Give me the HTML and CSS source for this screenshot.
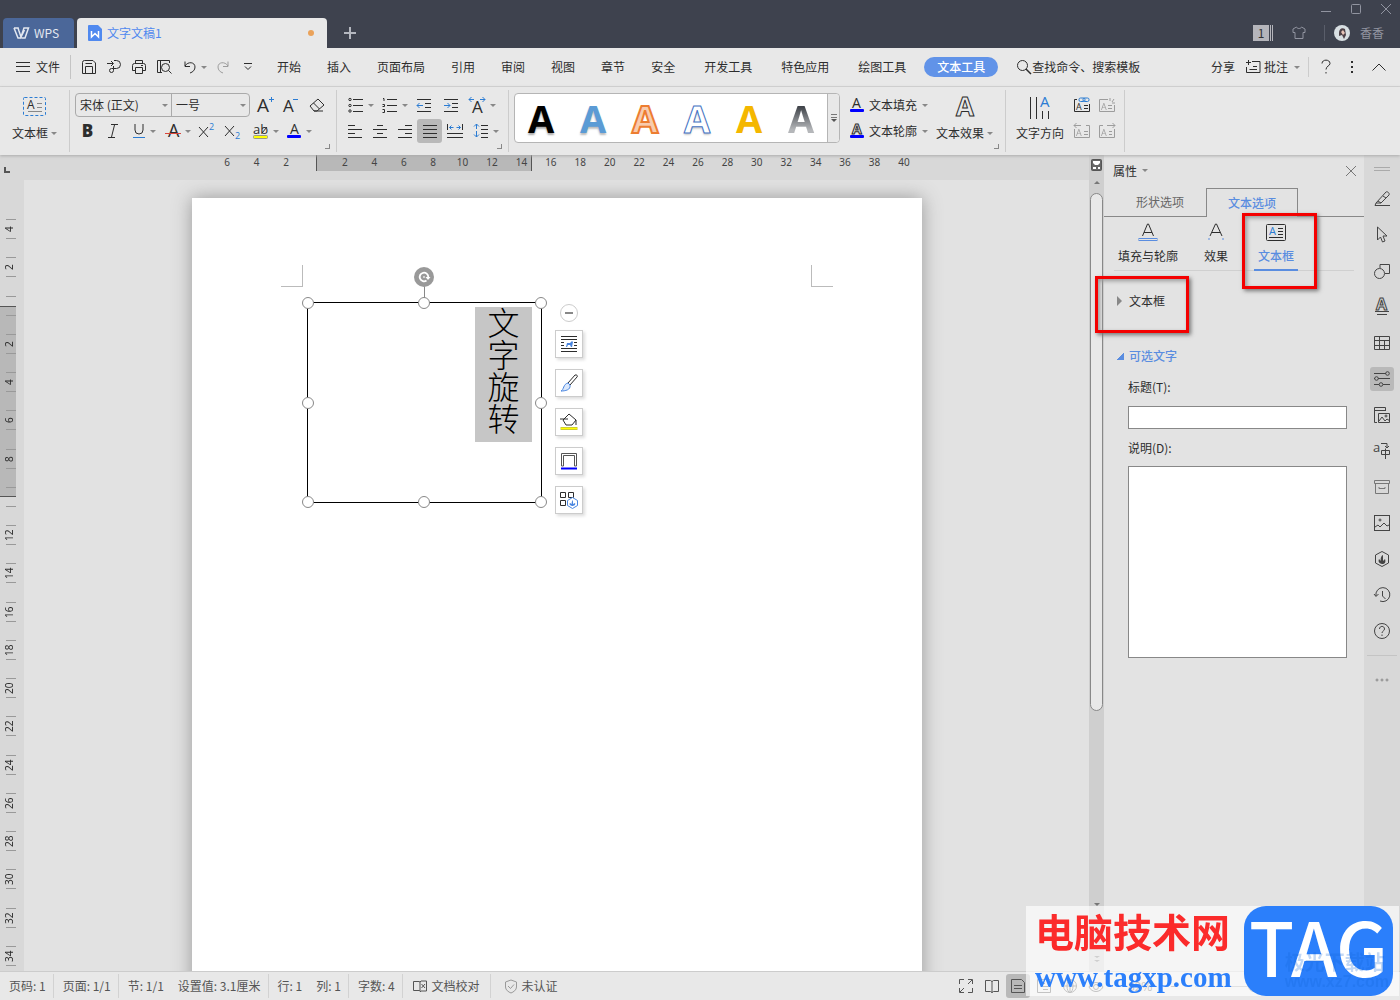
FILE: index.html
```html
<!DOCTYPE html>
<html lang="zh-CN">
<head>
    <meta charset="UTF-8">
    <meta name="viewport" content="width=device-width, initial-scale=1.0">
    <title>文字文稿1 - WPS</title>
    <link rel="stylesheet" href="styles.css">
</head>
<body>
    <header class="titlebar">
        <button class="wps-tab">
            <svg width="17" height="12" viewBox="0 0 17 12"><path d="M1 1h4l3 9L11 1h4.500L12 11H8.500M1 1l4 10h2.500l4-8M5 1l1 3" stroke-width="1.500"/></svg>
            WPS
        </button>
        <div class="doc-tab">
            <svg width="14" height="16" viewBox="0 0 14 16"><path d="M1 0h9l4 4v11a1 1 0 0 1-1 1H1a1 1 0 0 1-1-1V1a1 1 0 0 1 1-1z" fill="#5089ef" stroke="none"/><path d="M3.500 6v6L7 8.500l3.500 3.500V6" stroke="#fff" stroke-width="1.500"/></svg>
            <span>文字文稿1</span>
            <i class="unsaved"></i>
        </div>
        <button class="new-tab" aria-label="新建"><svg width="12" height="12" viewBox="0 0 12 12"><path d="M6 0v12M0 6h12" stroke-width="2"/></svg></button>
        <div class="title-right">
            <div class="window-buttons">
                <button aria-label="最小化"><svg width="12" height="12" viewBox="0 0 12 12"><path d="M1 8.500h10"/></svg></button>
                <button aria-label="最大化"><svg width="12" height="12" viewBox="0 0 12 12"><rect x="1.500" y="1.500" width="9" height="9" rx="1"/></svg></button>
                <button aria-label="关闭"><svg width="12" height="12" viewBox="0 0 12 12"><path d="M1 1l10 10M11 1L1 11"/></svg></button>
            </div>
            <div class="account">
                <span class="count">1</span>
                <svg width="14" height="14" viewBox="0 0 14 14"><path d="M4.500 1L1 3v3.500h2V12.500h8V6.500h2V3L9.500 1C9 3 5 3 4.500 1z"/></svg>
                <span class="user">
                    <svg width="16" height="16" viewBox="0 0 16 16"><circle cx="8" cy="8" r="8" fill="#d8dfe2" stroke="none"/><path d="M5 8c0-4 3-6 6-4l1 6-2 4-2-4-3 1z" fill="#4d4147" stroke="none"/><path d="M7 7l2-2 2 3-2 2z" fill="#e9c5b8" stroke="none"/></svg>
                    香香
                </span>
            </div>
        </div>
    </header>

    <nav class="menubar">
        <button class="file-btn"><svg width="14" height="12" viewBox="0 0 14 12"><path d="M0 1.500h14M0 5.500h14M0 10.500h14"/></svg>文件</button>
        <div class="quick">
            <button class="ic" aria-label="保存"><svg width="16" height="16" viewBox="0 0 16 16"><path d="M1.500 14.500v-11a2 2 0 0 1 2-2H12l2.500 2.500v10.500zM4.500 14V7.500h7V14M4.500 4.500H11"/></svg></button>
            <button class="ic" aria-label="输出"><svg width="16" height="16" viewBox="0 0 16 16"><path d="M1 4.500h6M5 2l2.500 2.500L5 7M8 1.500h2.500a4 4 0 0 1 0 8H7.500v2a2 2 0 1 1-2-2h2V7"/></svg></button>
            <button class="ic" aria-label="打印"><svg width="16" height="16" viewBox="0 0 16 16"><path d="M4.500 4V1.500h7V4M4 11.500H1.500v-5a2 2 0 0 1 2-2h9a2 2 0 0 1 2 2v5H12M4.500 8.500h7v6h-7zM10 6.500h2"/></svg></button>
            <button class="ic" aria-label="预览"><svg width="16" height="16" viewBox="0 0 16 16"><path d="M6 13.500H1.500v-12h12V4M4.500 13V1.500"/><circle cx="9.500" cy="8.500" r="4"/><path d="M12.500 11.500l3 3"/></svg></button>
            <button class="ic caret" aria-label="撤销"><svg width="14" height="16" viewBox="0 0 14 16"><path d="M2 2.500v5h5M2 7c3-5 10-4 10 1 0 3-2 5-5 6"/></svg></button>
            <button class="ic faded" aria-label="恢复"><svg width="14" height="16" viewBox="0 0 14 16"><path d="M12 2.500v5H7M12 7C9 2 2 3 2 8c0 3 2 5 5 6"/></svg></button>
            <button class="ic" aria-label="更多"><svg width="10" height="8" viewBox="0 0 10 8"><path d="M1 .5h8M2 3.500l3 3 3-3"/></svg></button>
        </div>
        <div class="tabs">
            <a href="#">开始</a>
            <a href="#">插入</a>
            <a href="#">页面布局</a>
            <a href="#">引用</a>
            <a href="#">审阅</a>
            <a href="#">视图</a>
            <a href="#">章节</a>
            <a href="#">安全</a>
        </div>
        <div class="tabs tabs-wide">
            <a href="#">开发工具</a>
            <a href="#">特色应用</a>
            <a href="#">绘图工具</a>
        </div>
        <a href="#" class="tab-active">文本工具</a>
        <button class="search"><svg width="16" height="16" viewBox="0 0 16 16"><circle cx="6.500" cy="6.500" r="5"/><path d="M10 10l5 5" stroke-width="1.500"/></svg>查找命令、搜索模板</button>
        <div class="menu-right">
            <button>分享</button>
            <button class="comment caret"><svg width="16" height="16" viewBox="0 0 16 16"><path d="M7 2.500h8v11H1.500V8M1 3.500h5M3.500 1v5M4.500 10.500H12M8 7.500h4"/></svg>批注</button>
            <span class="bar"></span>
            <button class="ic" aria-label="帮助"><svg width="12" height="16" viewBox="0 0 12 16"><path d="M2 4.500C2 0 10 0 10 4.500 10 7 6 7 6 10.500M6 13v1.500"/></svg></button>
            <button class="ic wide" aria-label="选项"><svg width="4" height="14" viewBox="0 0 4 14"><path d="M2 1v2M2 6v2M2 11v2" stroke-width="2"/></svg></button>
            <button class="ic" aria-label="折叠"><svg width="14" height="8" viewBox="0 0 14 8"><path d="M.5 7.500L7 1l6.500 6.500"/></svg></button>
        </div>
    </nav>

    <section class="ribbon">
        <div class="group">
            <button class="big caret-text">
                <svg width="24" height="22" viewBox="0 0 24 22"><rect x=".5" y="1.500" width="22" height="18" rx="1" stroke="#2b7cd3" stroke-dasharray="3 2"/><text x="4" y="13" font-size="12">A</text><path d="M14 7.500h5M14 11.500h5M5 15.500h14" stroke="#888"/></svg>
                <span>文本框</span>
            </button>
        </div>
        <div class="group rows font-group">
            <div class="row">
                <div class="combos">
                    <label class="combo family"><select aria-label="字体"><option>宋体 (正文)</option></select></label>
                    <label class="combo size"><select aria-label="字号"><option>一号</option></select></label>
                </div>
                <button class="ic" aria-label="增大字号"><svg width="18" height="18" viewBox="0 0 18 18"><text x="0" y="16" font-size="19">A</text><path d="M12 3.500h5M14.500 1v5" stroke="#2b7cd3"/></svg></button>
                <button class="ic" aria-label="减小字号"><svg width="18" height="18" viewBox="0 0 18 18"><text x="1" y="16" font-size="17">A</text><path d="M11 3.500h5" stroke="#2b7cd3"/></svg></button>
                <button class="ic wide" aria-label="清除格式"><svg width="18" height="16" viewBox="0 0 18 16"><path d="M2 9l8-7 6 6-7 6H6zM5.500 6l6 6M6 14h9"/></svg></button>
            </div>
            <div class="row">
                <button class="ic letter" aria-label="加粗"><b>B</b></button>
                <button class="ic" aria-label="倾斜"><svg width="12" height="16" viewBox="0 0 12 16"><path d="M4 1.500h7M1 14.500h7M7.500 2L4.500 14"/></svg></button>
                <button class="ic caret" aria-label="下划线"><svg width="14" height="16" viewBox="0 0 14 16"><path d="M3 1v6a4 4 0 0 0 8 0V1"/><path d="M1 14.500h12" stroke="#2b7cd3"/></svg></button>
                <button class="ic caret" aria-label="删除线"><svg width="16" height="16" viewBox="0 0 16 16"><text x="3" y="14" font-size="18">A</text><path d="M0 10.500h16" stroke="#d9453b"/></svg></button>
                <button class="ic" aria-label="上标"><svg width="16" height="16" viewBox="0 0 16 16"><path d="M1 4l9 10M10 4L1 14"/><text x="11" y="7" font-size="9" class="blue">2</text></svg></button>
                <button class="ic wide" aria-label="下标"><svg width="16" height="16" viewBox="0 0 16 16"><path d="M1 3l9 10M10 3L1 13"/><text x="11" y="16" font-size="9" class="blue">2</text></svg></button>
                <button class="ic caret" aria-label="突出显示"><svg width="17" height="16" viewBox="0 0 17 16"><text x="1" y="11" font-size="13">ab</text><path d="M15 4l-5 6"/><rect x="1.500" y="12.500" width="14" height="3" rx="1" fill="#ff0" stroke="#998"/></svg></button>
                <button class="ic caret" aria-label="字体颜色"><svg width="16" height="16" viewBox="0 0 16 16"><text x="4" y="11" font-size="14">A</text><rect x="1" y="12" width="14" height="3" rx="1" fill="#00f" stroke="none"/></svg></button>
            </div>
            <i class="launcher"></i>
        </div>
        <div class="group rows para-group">
            <div class="row">
                <button class="ic caret" aria-label="项目符号"><svg width="16" height="16" viewBox="0 0 16 16"><path d="M5 2.500h10M5 8.500h10M5 14.500h10"/><circle cx="2" cy="2.500" r="1.200"/><circle cx="2" cy="8.500" r="1.200"/><circle cx="2" cy="14" r="1.200"/></svg></button>
                <button class="ic caret" aria-label="编号"><svg width="16" height="16" viewBox="0 0 16 16"><path d="M5 2.500h10M5 8.500h10M5 14.500h10M1 1.500h1V4M.5 7.500h2v2h-2M.5 12.500h2v3h-2"/></svg></button>
                <button class="ic wide" aria-label="减少缩进"><svg width="16" height="16" viewBox="0 0 16 16"><path d="M1 2.500h14M9 6.500h6M9 10.500h6M1 14.500h14"/><path d="M1 8.500h6M3.500 6L1 8.500 3.500 11" stroke="#2b7cd3"/></svg></button>
                <button class="ic" aria-label="增加缩进"><svg width="16" height="16" viewBox="0 0 16 16"><path d="M1 2.500h14M9 6.500h6M9 10.500h6M1 14.500h14"/><path d="M1 8.500h6M4.500 6L7 8.500 4.500 11" stroke="#2b7cd3"/></svg></button>
                <button class="ic caret" aria-label="字符缩放"><svg width="18" height="18" viewBox="0 0 18 18"><text x="4" y="17" font-size="17">A</text><path d="M1 3.500h5M3.500 1L1 3.500 3.500 6M12 3.500h5M14.500 1L17 3.500 14.500 6" stroke="#2b7cd3"/></svg></button>
            </div>
            <div class="row">
                <button class="ic" aria-label="左对齐"><svg width="16" height="16" viewBox="0 0 16 16"><path d="M1 2.500h7M1 6.500h14M1 10.500h7M1 14.500h14"/></svg></button>
                <button class="ic" aria-label="居中"><svg width="16" height="16" viewBox="0 0 16 16"><path d="M5 2.500h6M1 6.500h14M5 10.500h6M1 14.500h14"/></svg></button>
                <button class="ic" aria-label="右对齐"><svg width="16" height="16" viewBox="0 0 16 16"><path d="M8 2.500h7M1 6.500h14M8 10.500h7M1 14.500h14"/></svg></button>
                <button class="ic on" aria-label="两端对齐"><svg width="16" height="16" viewBox="0 0 16 16"><path d="M1 2.500h14M1 6.500h14M1 10.500h14M1 14.500h14"/></svg></button>
                <button class="ic" aria-label="分散对齐"><svg width="18" height="16" viewBox="0 0 18 16"><path d="M1.500 1v6M16.500 1v6M1 10.500h16M1 14.500h16"/><path d="M3.500 4.500h4M5.500 2.500l-2 2 2 2M10.500 4.500h4M12.500 2.500l2 2-2 2" stroke="#2b7cd3"/></svg></button>
                <button class="ic caret" aria-label="行距"><svg width="16" height="16" viewBox="0 0 16 16"><path d="M8 2.500h7M8 6.500h7M8 10.500h7M8 14.500h7"/><path d="M3.500 1v5M1 3.500L3.500 1 6 3.500M3.500 8v6M1 11.500L3.500 14 6 11.500" stroke="#2b7cd3"/></svg></button>
            </div>
            <i class="launcher"></i>
        </div>
        <div class="group text-group">
            <div class="gallery">
                <button class="wa wa-black">A</button>
                <button class="wa wa-blue">A</button>
                <button class="wa wa-orange">A</button>
                <button class="wa wa-outline">A</button>
                <button class="wa wa-gold">A</button>
                <button class="wa wa-gray">A</button>
                <button class="more" aria-label="更多样式"><svg width="8" height="10" viewBox="0 0 8 10"><path d="M1 1.500h6M1 4.500h6" stroke="#777"/><path d="M1 6h6L4 9z" fill="#555" stroke="none"/></svg></button>
            </div>
            <div class="rows">
                <button class="line-btn caret"><svg width="14" height="16" viewBox="0 0 14 16"><text x="2" y="11" font-size="14">A</text><rect y="12" width="14" height="3" rx="1" fill="#00f" stroke="none"/></svg>文本填充</button>
                <button class="line-btn caret"><svg width="14" height="16" viewBox="0 0 14 16"><text x="2" y="11" font-size="14" class="hollow">A</text><rect y="12" width="14" height="3" rx="1" fill="#00f" stroke="none"/></svg>文本轮廓</button>
            </div>
            <button class="big caret-text">
                <svg width="24" height="22" viewBox="0 0 24 22"><text x="3" y="20" font-size="26" class="hollow">A</text></svg>
                <span>文本效果</span>
            </button>
            <i class="launcher"></i>
        </div>
        <div class="group dir-group">
            <button class="big">
                <svg width="24" height="24" viewBox="0 0 24 24"><path d="M2.500 1v22M8.500 1v22M14.500 15v8M20.500 15v8"/><text x="12" y="11" font-size="15" class="blue">A</text></svg>
                <span>文字方向</span>
            </button>
            <div class="rows">
                <div class="row">
                    <button class="ic" aria-label="创建链接"><svg width="18" height="16" viewBox="0 0 18 16"><path d="M4 2.500H1.500v12h15V7"/><text x="3" y="13" font-size="9">A</text><path d="M11 8.500h4M11 11.500h4"/><g stroke="#2b7cd3"><rect x="6" y="1" width="6" height="3.500" rx="1.500"/><rect x="10" y="1" width="6" height="3.500" rx="1.500"/></g></svg></button>
                    <button class="ic faded" aria-label="断开链接"><svg width="18" height="16" viewBox="0 0 18 16"><path d="M10 2.500H1.500v12h15V8M12 4V1M14 5l2-3M14 6h3"/><text x="3" y="13" font-size="9">A</text><path d="M10 8.500h4M10 11.500h4"/></svg></button>
                </div>
                <div class="row">
                    <button class="ic faded" aria-label="前一文本框"><svg width="18" height="16" viewBox="0 0 18 16"><path d="M1.500 6v8.500h15V2.500H13M1 2.500h7M3.500 0L1 2.500 3.500 5"/><text x="3" y="13" font-size="9">A</text><path d="M11 8.500h4M11 11.500h4"/></svg></button>
                    <button class="ic faded" aria-label="后一文本框"><svg width="18" height="16" viewBox="0 0 18 16"><path d="M5 2.500H1.500v12h15V6M9 2.500h8M14.500 0L17 2.500 14.500 5"/><text x="3" y="13" font-size="9">A</text><path d="M11 8.500h3M11 11.500h3"/></svg></button>
                </div>
            </div>
        </div>
    </section>

    <main class="workspace">
        <div class="vruler">
            <svg width="8" height="8" viewBox="0 0 8 8"><path d="M2 0v6M1 5h6" stroke="#555" stroke-width="2"/></svg>
            <ol>
                <li><b>4</b></li><li><b>2</b></li><li><b></b></li><li><b>2</b></li><li><b>4</b></li>
                <li><b>6</b></li><li><b>8</b></li><li><b></b></li><li><b>12</b></li><li><b>14</b></li>
                <li><b>16</b></li><li><b>18</b></li><li><b>20</b></li><li><b>22</b></li><li><b>24</b></li>
                <li><b>26</b></li><li><b>28</b></li><li><b>30</b></li><li><b>32</b></li><li><b>34</b></li>
            </ol>
        </div>
        <div class="editor">
            <div class="hruler">
                <ol>
                    <li>6</li><li>4</li><li>2</li><li></li><li>2</li><li>4</li><li>6</li><li>8</li>
                    <li>10</li><li>12</li><li>14</li><li>16</li><li>18</li><li>20</li><li>22</li><li>24</li>
                    <li>26</li><li>28</li><li>30</li><li>32</li><li>34</li><li>36</li><li>38</li><li>40</li>
                </ol>
            </div>
            <div class="canvas">
                <article class="page">
                    <i class="crop crop-left"></i>
                    <i class="crop crop-right"></i>
                    <div class="textbox">
                        <p>文字旋转</p>
                        <i class="stem"></i>
                        <button class="rotate" aria-label="旋转"><svg width="12" height="12" viewBox="0 0 12 12"><path d="M8.500 9.500A4.300 4.300 0 1 1 10.300 6" stroke="#fff" stroke-width="1.800"/><path d="M7.500 6h5L10 9z" fill="#fff" stroke="none"/><circle cx="6" cy="6" r=".5" stroke="#fff"/></svg></button>
                        <i class="handle nw"></i><i class="handle n"></i><i class="handle ne"></i>
                        <i class="handle w"></i><i class="handle e"></i>
                        <i class="handle sw"></i><i class="handle s"></i><i class="handle se"></i>
                    </div>
                    <div class="float-tools">
                        <button class="collapse" aria-label="收起"><svg width="10" height="10" viewBox="0 0 10 10"><path d="M1 5h8" stroke="#888" stroke-width="2"/></svg></button>
                        <button aria-label="布局选项"><svg width="18" height="18" viewBox="0 0 18 18"><path d="M1 1.500h16M1 4.500h16M1 7.500h3M14 7.500h3M1 10.500h3M14 10.500h3M1 13.500h16M1 16.500h16"/><path d="M6 12l1-4h3l2-2 1 1-1 5h-1l-1-2H8l-1 2z" fill="#4a86e0" stroke="none"/></svg></button>
                        <button aria-label="形状样式"><svg width="18" height="18" viewBox="0 0 18 18"><path d="M8 9l7-8c2-.5 3 1 2 2l-7 8z"/><path d="M8 9l2 2c1 5-5 6-9 6 3-1 2-7 7-8z" stroke="#4a86e0" fill="#dbe8fb"/></svg></button>
                        <button aria-label="填充"><svg width="18" height="18" viewBox="0 0 18 18"><path d="M3 7l6-6 7 6-4 5H6zM0 6h8M16 7v5"/><rect x="1" y="14.500" width="16" height="2" fill="#ff0" stroke="#cc3"/></svg></button>
                        <button aria-label="轮廓"><svg width="18" height="18" viewBox="0 0 18 18"><path d="M1.500 14V1.500h15V14h-2V3.500h-11V14z" stroke="#555"/><path d="M1 16.500h16" stroke="#00f" stroke-width="2"/></svg></button>
                        <button aria-label="更多设置"><svg width="18" height="18" viewBox="0 0 18 18"><path d="M.5 1.500h5v5h-5zM8.500 1.500h5v5h-5zM.5 9.500h5v5h-5z"/><path d="M12.500 6.500l5 3v5l-5 3-5-3v-5z" stroke="#4a86e0" fill="#fff"/><path d="M12 15c-4-1-2-3-2-3l2 1c-1-2 1-4 1-4v4l2-1c1 2-1 3-3 3z" fill="#4a86e0" stroke="none"/></svg></button>
                    </div>
                </article>
            </div>
        </div>
        <div class="scrollbar">
            <svg class="ruler-toggle" width="11" height="12" viewBox="0 0 11 12"><rect x=".5" y=".5" width="10" height="11" rx="1" fill="#666" stroke="#555"/><path d="M2 2h7v2L7 6H4L2 4zM2 8h3v2H2zM7 8h2v2H7z" fill="#fff" stroke="none"/></svg>
            <i class="arrow up"></i>
            <div class="thumb"></div>
            <i class="arrow down"></i>
            <svg class="page-jump" width="8" height="8" viewBox="0 0 8 8"><path d="M1 1h6L4 3zM1 5h6L4 7z" fill="#777" stroke="none"/></svg>
        </div>
        <aside class="panel">
            <div class="panel-head">
                <button class="caret">属性</button>
                <button aria-label="关闭"><svg width="10" height="10" viewBox="0 0 10 10"><path d="M0 0l10 10M10 0L0 10" stroke="#777"/></svg></button>
            </div>
            <div class="panel-tabs">
                <button>形状选项</button>
                <button class="active">文本选项</button>
            </div>
            <div class="sub-tabs">
                <button><svg width="20" height="20" viewBox="0 0 20 20"><path d="M4.500 14L9.500 2h1l5 12M6 10.500h8"/><rect x="1" y="16.500" width="18" height="2" stroke="#5a8de0"/></svg>填充与轮廓</button>
                <button><svg width="20" height="20" viewBox="0 0 20 20"><path d="M4 14L9.500 2h1L16 14M6 10.500h8"/><path d="M3 16v3M17 16v3" stroke="#5a8de0" stroke-dasharray="2 1"/></svg>效果</button>
                <button class="active"><svg width="20" height="20" viewBox="0 0 20 20"><rect x=".5" y="2.500" width="19" height="16" rx="1"/><text x="3" y="13" font-size="11" class="blue">A</text><path d="M12 6.500h5M12 9.500h5M12 12.500h5M3 15.500h14"/></svg>文本框</button>
            </div>
            <div class="sections">
                <button class="section closed">文本框</button>
                <button class="section open">可选文字</button>
                <label for="alt-title">标题(T):</label>
                <input type="text" id="alt-title">
                <label for="alt-desc">说明(D):</label>
                <textarea id="alt-desc"></textarea>
            </div>
            <i class="mark mark-tab"></i>
            <i class="mark mark-section"></i>
        </aside>
        <div class="side">
            <i class="grip"></i>
            <button aria-label="样式"><svg width="18" height="18" viewBox="0 0 18 18"><path d="M3 13L13 2c1-1 4 1 3 3L8 13zM3 13l-1 2.500h15M8 13l-3-2M10 6l3 2"/></svg></button>
            <button aria-label="选择"><svg width="18" height="18" viewBox="0 0 18 18"><path d="M4.500 1v13l3-3 2 5 2.500-1-2-5h4z"/></svg></button>
            <button aria-label="形状"><svg width="18" height="18" viewBox="0 0 18 18"><circle cx="6.500" cy="11.500" r="5"/><path d="M7 6V2.500h9.500v9H12"/></svg></button>
            <button aria-label="艺术字"><svg width="18" height="18" viewBox="0 0 18 18"><text x="3" y="12" font-size="16" class="hollow">A</text><path d="M2 13.500h14M4 16.500h10"/></svg></button>
            <button aria-label="表格"><svg width="18" height="18" viewBox="0 0 18 18"><path d="M1.500 2.500h15v13h-15zM1.500 6.500h15M1.500 11.500h15M6.500 2.500v13M11.500 6.500v9"/></svg></button>
            <button class="on" aria-label="属性"><svg width="18" height="18" viewBox="0 0 18 18"><path d="M1 3.500h12M5 8.500h12M1 8.500h1M1 14.500h5M10 14.500h7"/><circle cx="14.500" cy="3.500" r="1.800"/><circle cx="3.500" cy="8.500" r="1.800"/><circle cx="8" cy="14.500" r="1.800"/></svg></button>
            <button aria-label="图片库"><svg width="18" height="18" viewBox="0 0 18 18"><path d="M4 16.500H1.500v-15h11V5M1.500 4.500h11M5.500 7.500h11v9h-11zM6 15l3-4 3 4 2-2 3 2"/><circle cx="13" cy="10" r="1"/></svg></button>
            <button aria-label="翻译"><svg width="18" height="18" viewBox="0 0 18 18"><text x="0" y="10" font-size="13">a</text><path d="M8 1.500h6V6M12 4l2 2 2-2M8.500 8.500h8v4h-8zM12.500 6.500V17"/></svg></button>
            <button aria-label="归档"><svg width="18" height="18" viewBox="0 0 18 18"><path d="M1.500 2.500h15v3h-15zM2.500 5.500h13v10h-13zM6 9v1.500h6V9" stroke="#777"/></svg></button>
            <button aria-label="图片"><svg width="18" height="18" viewBox="0 0 18 18"><rect x="1.500" y="1.500" width="15" height="15"/><circle cx="7" cy="6" r="1"/><path d="M2 13l3-2 2 2 4-4 3 3 2-1"/></svg></button>
            <button aria-label="稻壳"><svg width="18" height="18" viewBox="0 0 18 18"><path d="M9 1.500l6.500 3.500v8L9 16.500 2.500 13V5z"/><path d="M9 14c-5-1-3-5-3-5l2 2c-1-3 1-6 2-6v6l2-2c1 3 0 5-3 5z" fill="#444" stroke="none"/></svg></button>
            <button aria-label="历史"><svg width="18" height="18" viewBox="0 0 18 18"><path d="M3 10a7 7 0 1 1 4 5M1 8l2 2.500L5.500 8M9.500 5v5l3 3"/></svg></button>
            <button aria-label="帮助"><svg width="18" height="18" viewBox="0 0 18 18"><circle cx="9" cy="9" r="7.500"/><path d="M6.500 7c0-3.500 5-3.500 5 0C11.500 9 9 9 9 11M9 12.500V14"/></svg></button>
            <hr>
            <button aria-label="更多"><svg width="14" height="4" viewBox="0 0 14 4"><g stroke="#888"><circle cx="2" cy="2" r="1"/><circle cx="7" cy="2" r="1"/><circle cx="12" cy="2" r="1"/></g></svg></button>
        </div>
    </main>

    <footer class="statusbar">
        <div class="cell">页码: 1</div>
        <div class="cell">页面: 1/1</div>
        <div class="cell"><span>节: 1/1</span><span>设置值: 3.1厘米</span></div>
        <div class="cell"><span>行: 1</span><span>列: 1</span></div>
        <div class="cell">字数: 4</div>
        <button class="cell"><svg width="16" height="14" viewBox="0 0 16 14"><path d="M8 3v9l-1-.5H1.500v-9H7L8 3l1-1h5.500v10H9L8 13M9.500 5l3.500 4M13 5L9.500 9"/></svg>文档校对</button>
        <button class="cell"><svg width="14" height="14" viewBox="0 0 14 14"><path d="M7 1l5.500 2v5c0 3-3 5-5.500 6-2.500-1-5.500-3-5.500-6V3zM4 7l2.500 2.500L10 5.500" stroke="#999"/></svg>未认证</button>
        <div class="views">
            <button aria-label="全屏"><svg width="16" height="16" viewBox="0 0 16 16"><path d="M1.500 6V1.500H6M10 1.500h4.500V6M14.500 10v4.500H10M6 14.500H1.500V10M10 6l4-4M2 14l4-4"/></svg></button>
            <button aria-label="阅读"><svg width="16" height="16" viewBox="0 0 16 16"><path d="M8 3v12M1.500 2.500h5L8 3.500l1.500-1h5v11h-5L8 14.500l-1.500-1h-5z"/></svg></button>
            <button class="on" aria-label="页面"><svg width="16" height="16" viewBox="0 0 16 16"><path d="M1.500 1.500h10l3 3v10h-13zM4 7.500h8M4 10.500h8"/></svg></button>
            <button aria-label="大纲"><svg width="16" height="16" viewBox="0 0 16 16"><path d="M1.500 1.500h13v13h-13zM4 5.500h5M7 8.500h5M7 11.500h5"/></svg></button>
            <button aria-label="网页"><svg width="16" height="16" viewBox="0 0 16 16"><circle cx="8" cy="8" r="6.500"/><ellipse cx="8" cy="8" rx="3" ry="6.500"/><path d="M1.500 8h13M8 1.500v13"/></svg></button>
            <button aria-label="护眼"><svg width="16" height="16" viewBox="0 0 16 16"><path d="M1 9c3-6 11-6 14 0-3 6-11 6-14 0z"/><circle cx="8" cy="9" r="2.500"/></svg></button>
        </div>
        <div class="zoom">
            <span>82%</span>
            <label for="zoom">−</label>
            <input type="range" id="zoom" min="10" max="200" value="92">
            <b>+</b>
            <svg width="12" height="12" viewBox="0 0 12 12"><path d="M.5 4V.5H4M8 .5h3.500V4M11.500 8v3.500H8M4 11.500H.5V8"/></svg>
        </div>
    </footer>

    <div class="watermark">
        <div class="site">
            <strong>电脑技术网</strong>
            <span>www.tagxp.com</span>
        </div>
        <div class="tag">TAG</div>
        <div class="ghost"><span>极光下载站</span><span>www.xz7.com</span></div>
    </div>
</body>
</html>
```

FILE: styles.css
```css
* {
    margin: 0;
    padding: 0;
    box-sizing: border-box;
}
body {
    display: flex;
    flex-direction: column;
    height: 100vh;
    overflow: hidden;
    background: #e8e8e8;
    color: #2d2d2d;
    font: 12px/16px "Noto Sans CJK SC", sans-serif;
}
button, input, select, textarea {
    font: inherit;
    color: inherit;
    background: none;
    border: none;
}
button {
    display: flex;
    align-items: center;
    justify-content: center;
    white-space: nowrap;
    cursor: pointer;
}
a {
    color: inherit;
    text-decoration: none;
    white-space: nowrap;
}
ol {
    list-style: none;
}
svg {
    flex: none;
    fill: none;
    stroke: currentColor;
    overflow: visible;
}
svg text {
    font-family: "Open Sans", sans-serif;
    font-weight: 400;
    fill: currentColor;
    stroke: none;
}
svg text.blue {
    fill: #2b7cd3;
}
svg text.hollow {
    font-weight: 700;
    fill: #e8e8e8;
    stroke: currentColor;
}
.faded {
    opacity: 0.4;
}
.caret::after, .caret-text span::after {
    content: "";
    border: 3px solid transparent;
    border-top-color: #888;
    border-bottom: none;
    margin-left: 5px;
}

/* title bar */
.titlebar {
    display: flex;
    align-items: flex-end;
    height: 48px;
    padding-left: 3px;
    background: #3e424e;
    color: #b4b7bf;
}
.wps-tab {
    gap: 4px;
    width: 71px;
    height: 30px;
    padding-right: 5px;
    background: #4b6799;
    color: #e4e8f0;
    border-radius: 4px 4px 0 0;
}
.doc-tab {
    display: flex;
    align-items: center;
    gap: 5px;
    width: 250px;
    height: 30px;
    margin-left: 3px;
    padding: 0 13px 0 11px;
    background: #e8e8e8;
    color: #5089ef;
    border-radius: 4px 4px 0 0;
}
.unsaved {
    width: 6px;
    height: 6px;
    margin-left: auto;
    border-radius: 50%;
    background: #eaa25a;
}
.new-tab {
    width: 46px;
    height: 30px;
}
.title-right {
    margin-left: auto;
    color: #9194a0;
}
.window-buttons {
    display: flex;
    justify-content: flex-end;
    gap: 18px;
    padding-right: 8px;
}
.window-buttons button {
    height: 18px;
}
.account {
    display: flex;
    align-items: center;
    justify-content: flex-end;
    height: 30px;
    gap: 18px;
    padding-right: 16px;
}
.count {
    width: 21px;
    padding-right: 5px;
    line-height: 16px;
    text-align: center;
    background: linear-gradient(to right, #b5b5bb 16px, transparent 16px 17px, #b5b5bb 17px 18px, transparent 18px 19px, #b5b5bb 19px 20px, transparent 20px);
    color: #333;
}
.user {
    display: flex;
    align-items: center;
    gap: 10px;
    padding-left: 9px;
    border-left: 1px solid #5a5e6a;
}

/* menu bar */
.menubar {
    display: flex;
    align-items: center;
    height: 39px;
    padding-left: 16px;
    border-bottom: 1px solid #d5d5d5;
}
.file-btn {
    gap: 6px;
    height: 24px;
    padding-right: 10px;
    border-right: 1px solid #c4c4c4;
}
.quick {
    display: flex;
    padding-left: 5px;
}
.ic {
    width: 25px;
    height: 24px;
}
.ic.caret {
    width: 34px;
    padding-left: 4px;
}
.ic.caret::after {
    margin-left: 4px;
}
.ic.wide {
    width: 28px;
}
.on {
    background: #b9b9b9;
    border-radius: 3px;
}
.tabs {
    display: flex;
    gap: 26px;
    padding-left: 17px;
}
.tabs-wide {
    gap: 29px;
    padding-left: 29px;
}
.tab-active {
    margin: 0 18px;
    padding: 2px 13px;
    border-radius: 10px;
    background: #6193e8;
    color: #fff;
    font-weight: 500;
}
.menu-right {
    display: flex;
    align-items: center;
    margin-left: auto;
    padding-right: 9px;
}
.comment {
    gap: 3px;
    margin-left: 10px;
}
.comment::after {
    margin-left: 3px;
}
.bar {
    width: 1px;
    height: 20px;
    margin: 0 4px 0 8px;
    background: #ccc;
}

/* ribbon */
.ribbon {
    display: flex;
    align-items: center;
    height: 68px;
    box-shadow: 0 1px 3px #aaa;
    position: relative;
    z-index: 2;
}
.group {
    display: flex;
    position: relative;
    height: 62px;
    padding: 3px 5px 0;
    border-right: 1px solid #ccc;
}
.rows {
    display: flex;
    flex-direction: column;
    gap: 2px;
}
.row {
    display: flex;
    align-items: center;
}
.big {
    flex-direction: column;
    justify-content: space-between;
    height: 48px;
    padding: 3px 7px 0;
}
.big span {
    display: flex;
    align-items: center;
}
.caret-text span::after {
    margin-left: 3px;
}
.font-group {
    width: 267px;
}
.para-group {
    width: 172px;
}
.combos {
    display: flex;
    width: 176px;
    height: 24px;
    border: 1px solid #aaa;
    border-radius: 4px;
    margin-right: 3px;
}
.combo {
    display: grid;
    align-items: center;
}
.combo.family {
    width: 96px;
    border-right: 1px solid #aaa;
}
.combo.size {
    flex: 1;
}
.combo select {
    grid-area: 1 / 1;
    appearance: none;
    padding-left: 4px;
}
.combo::after {
    content: "";
    grid-area: 1 / 1;
    justify-self: end;
    margin-right: 3px;
    border: 3px solid transparent;
    border-top-color: #888;
    border-bottom: none;
    pointer-events: none;
}
.letter {
    font: 700 17px/24px "Open Sans", sans-serif;
}
.launcher {
    position: absolute;
    right: 6px;
    bottom: 3px;
    width: 5px;
    height: 5px;
    border: solid #888;
    border-width: 0 1px 1px 0;
}
.text-group {
    gap: 5px;
}
.gallery {
    display: flex;
    width: 326px;
    height: 50px;
    margin-right: 5px;
    border: 1px solid #b5b5b5;
    border-radius: 4px;
    background: #fff;
}
.wa {
    flex: 1;
    font: 700 38px/48px "Open Sans", sans-serif;
}
.wa-black {
    color: #000;
    text-shadow: 0 2px 2px #aaa;
}
.wa-blue {
    color: #5b9bd5;
    text-shadow: 0 2px 2px #bbb;
}
.wa-orange {
    color: #f8cbad;
    -webkit-text-stroke: 2px #ed7d31;
}
.wa-outline {
    color: #fff;
    -webkit-text-stroke: 1px #4472c4;
    text-shadow: 0 2px 2px #ccc;
}
.wa-gold {
    color: #f4b700;
}
.wa-gray {
    color: transparent;
    background: linear-gradient(#3c4046 25%, #b5b7ba 75%);
    -webkit-background-clip: text;
    background-clip: text;
}
.more {
    width: 12px;
    border-left: 1px solid #b5b5b5;
    background: #e8e8e8;
    border-radius: 0 4px 4px 0;
}
.line-btn {
    gap: 5px;
    height: 24px;
}
.line-btn::after {
    margin-left: 0;
}
.text-group .big {
    padding-left: 3px;
}
.dir-group .big {
    padding: 3px 5px 0;
}

/* workspace */
.workspace {
    display: flex;
    flex: 1;
    min-height: 0;
}
.vruler {
    width: 24px;
    padding-top: 12px;
    background: #d8d8d8;
    overflow: hidden;
}
.vruler svg {
    display: block;
    height: 8px;
    margin-left: 3px;
}
.vruler ol {
    display: flex;
    flex-direction: column;
    width: 16px;
    height: 765px;
    margin-top: 35px;
    background: linear-gradient(transparent 96px, #555 96px 97px, #b8b8b8 97px 286px, #555 286px 287px, transparent 287px);
}
.vruler li {
    display: flex;
    flex: 1;
    align-items: center;
    justify-content: flex-end;
}
.vruler b {
    display: flex;
    align-items: center;
    justify-content: center;
    width: 10px;
    height: 20px;
    border: solid #999;
    border-width: 1px 0;
    padding-left: 5px;
    writing-mode: vertical-rl;
    transform: rotate(180deg);
    font: 10px/10px "Noto Sans", sans-serif;
}
.editor {
    display: flex;
    flex-direction: column;
    flex: 1;
    min-width: 0;
}
.hruler {
    height: 25px;
    background: #d8d8d8;
}
.hruler ol {
    display: flex;
    width: 730px;
    height: 16px;
    margin: 0 auto;
    padding: 0 3px 0 21px;
    background: linear-gradient(to right, transparent 124px, #555 124px 125px, #b8b8b8 125px 339px, #555 339px 340px, transparent 340px);
    font: 10px/15px "Noto Sans", sans-serif;
    color: #444;
}
.hruler li {
    flex: 1;
    text-align: center;
}
.canvas {
    flex: 1;
    min-height: 0;
    padding-top: 18px;
    background: #e2e2e2;
    overflow: hidden;
}
.page {
    position: relative;
    width: 730px;
    height: 1032px;
    margin: 0 auto;
    background: #fff;
    box-shadow: 0 0 18px #999;
}
.crop {
    position: absolute;
    top: 67px;
    width: 22px;
    height: 22px;
    border: 0 solid #bbb;
}
.crop-left {
    left: 89px;
    border-width: 0 1px 1px 0;
}
.crop-right {
    right: 89px;
    border-width: 0 0 1px 1px;
}
.textbox {
    position: absolute;
    left: 115px;
    top: 104px;
    width: 235px;
    height: 201px;
    padding: 4px 9px;
    border: 1px solid #000;
    writing-mode: vertical-rl;
}
.textbox p {
    width: 57px;
    height: 135px;
    background: #c6c6c6;
    color: #000;
    font-size: 32px;
    font-weight: 300;
    line-height: 57px;
}
.handle {
    position: absolute;
    width: 12px;
    height: 12px;
    margin: -6px;
    border: 1px solid #888;
    border-radius: 50%;
    background: #fff;
}
.nw, .w, .sw { left: 0; }
.n, .s { left: 50%; }
.ne, .e, .se { left: 100%; }
.nw, .n, .ne { top: 0; }
.w, .e { top: 50%; }
.sw, .s, .se { top: 100%; }
.stem {
    position: absolute;
    left: 50%;
    top: -20px;
    width: 1px;
    height: 20px;
    background: #888;
}
.rotate {
    position: absolute;
    left: 50%;
    top: -36px;
    width: 20px;
    height: 20px;
    margin-left: -10px;
    border-radius: 50%;
    background: #999;
}
.float-tools {
    position: absolute;
    left: 363px;
    top: 106px;
    display: flex;
    flex-direction: column;
    align-items: center;
    gap: 11px;
}
.float-tools button {
    width: 28px;
    height: 28px;
    border: 1px solid #ccc;
    background: #fff;
    box-shadow: 2px 2px 3px #ddd;
}
.float-tools .collapse {
    width: 18px;
    height: 18px;
    border-radius: 50%;
    box-shadow: none;
    margin-bottom: -3px;
}
.scrollbar {
    display: flex;
    flex-direction: column;
    align-items: center;
    width: 15px;
    padding: 4px 0 8px;
    background: #cfcfcf;
}
.arrow {
    border: 3px solid transparent;
}
.up {
    margin: 7px 0;
    border-bottom-color: #777;
}
.thumb {
    width: 13px;
    height: 518px;
    margin-top: 2px;
    border: 1px solid #888;
    border-radius: 7px;
    background: #e8e8e8;
}
.down {
    margin-top: auto;
    margin-bottom: 46px;
    border-top-color: #777;
}

/* properties panel */
.panel {
    position: relative;
    width: 260px;
    background: #e3e3e3;
}
.panel-head {
    display: flex;
    justify-content: space-between;
    height: 33px;
    padding: 0 8px 2px 9px;
}
.panel-tabs {
    display: flex;
    height: 29px;
}
.panel-tabs::after {
    content: "";
    flex: 1;
    border-bottom: 1px solid #888;
}
.panel-tabs button {
    width: 102px;
    padding-left: 10px;
    border-bottom: 1px solid #888;
    color: #666;
}
.panel-tabs .active {
    width: 92px;
    padding: 0;
    border: 1px solid #888;
    border-bottom: none;
    color: #5a8de0;
    font-weight: 500;
}
.sub-tabs {
    display: flex;
    gap: 22px;
    margin: 0 10px;
    padding: 4px 4px 0;
    border-bottom: 1px solid #d0d0d0;
}
.sub-tabs button {
    flex-direction: column;
    gap: 6px;
    height: 50px;
    padding-bottom: 4px;
    margin-bottom: -1px;
    border-bottom: 2px solid transparent;
}
.sub-tabs button:nth-child(2) {
    padding-right: 4px;
    padding-left: 4px;
}
.sub-tabs svg {
    color: #2d2d2d;
}
.sub-tabs .active {
    padding-right: 4px;
    padding-left: 4px;
    border-color: #5a8de0;
    color: #5a8de0;
    font-weight: 500;
}
.sections {
    display: flex;
    flex-direction: column;
    padding: 20px 17px 0 24px;
}
.section {
    justify-content: flex-start;
    gap: 7px;
    height: 20px;
    margin: 0 0 35px -11px;
}
.closed::before {
    content: "";
    border: solid transparent;
    border-width: 5px 0 5px 5px;
    border-left-color: #888;
}
.open {
    gap: 5px;
    margin-bottom: 13px;
    color: #5a8de0;
    font-weight: 500;
}
.open::before {
    content: "";
    width: 7px;
    height: 7px;
    background: linear-gradient(135deg, transparent 50%, #5a8de0 50%);
}
.sections input, .sections textarea {
    width: 100%;
    border: 1px solid #888;
    background: #fff;
    padding: 2px 4px;
}
.sections input {
    height: 23px;
    margin: 11px 0;
}
.sections textarea {
    height: 192px;
    margin-top: 10px;
    resize: none;
}
.mark {
    position: absolute;
    border: 3px solid #f40000;
    box-shadow: 2px 2px 4px #777, inset 2px 2px 4px #999;
}
.mark-tab {
    left: 138px;
    top: 58px;
    width: 75px;
    height: 76px;
}
.mark-section {
    left: -9px;
    top: 121px;
    width: 94px;
    height: 57px;
}
.side {
    display: flex;
    flex-direction: column;
    align-items: center;
    gap: 12px;
    width: 36px;
    padding: 12px 1px 0 0;
    background: #d8d8d8;
    color: #444;
}
.side button {
    width: 24px;
    height: 24px;
}
.side .hollow {
    fill: #d8d8d8;
}
.grip {
    width: 16px;
    height: 4px;
    margin-bottom: 4px;
    border: solid #aaa;
    border-width: 1px 0;
}
.side hr {
    width: 30px;
    border: none;
    border-top: 1px solid #c4c4c4;
}

/* status bar */
.statusbar {
    display: flex;
    align-items: center;
    height: 29px;
    border-top: 1px solid #ccc;
    color: #555;
}
.cell {
    display: flex;
    align-items: center;
    gap: 14px;
    height: 24px;
    padding: 0 7px 0 9px;
    border-right: 1px solid #d2d2d2;
    white-space: nowrap;
}
button.cell {
    gap: 4px;
    padding-right: 10px;
}
button.cell:last-of-type {
    padding-left: 13px;
    border: none;
}
.views {
    display: flex;
    gap: 2px;
    margin-left: auto;
}
.views button {
    width: 24px;
    height: 24px;
}
.zoom {
    display: flex;
    align-items: center;
    gap: 18px;
    width: 292px;
    padding: 0 16px 0 20px;
}
.zoom input {
    flex: 1;
    min-width: 0;
    appearance: none;
    height: 1px;
    background: #aaa;
}
.zoom input::-webkit-slider-thumb {
    appearance: none;
    width: 12px;
    height: 12px;
    border: 1px solid #777;
    border-radius: 50%;
    background: #e8e8e8;
}

/* site watermark */
.watermark {
    position: fixed;
    right: 1px;
    bottom: 4px;
    z-index: 5;
    display: flex;
    justify-content: space-between;
    width: 373px;
    height: 90px;
    padding: 0 6px 0 9px;
    background: rgba(255, 255, 255, 0.65);
}
.site {
    display: flex;
    flex-direction: column;
    color: #2b7ffb;
}
.site strong {
    color: #fb2b2b;
    font-size: 39px;
    font-weight: 700;
    line-height: 48px;
}
.site span {
    font: 700 29px/46px "Liberation Serif", serif;
}
.tag {
    width: 149px;
    border-radius: 22px;
    background: #2b7ffb;
    color: #fff;
    font-size: 74px;
    font-weight: 500;
    line-height: 78px;
    text-align: center;
}
.ghost {
    position: absolute;
    right: 10px;
    bottom: 6px;
    display: flex;
    flex-direction: column;
    color: #1266d8;
    opacity: 0.25;
    font-size: 20px;
    font-weight: 700;
    line-height: 24px;
}
.ghost span + span {
    font: 700 16px/16px "Liberation Sans", sans-serif;
}
```
